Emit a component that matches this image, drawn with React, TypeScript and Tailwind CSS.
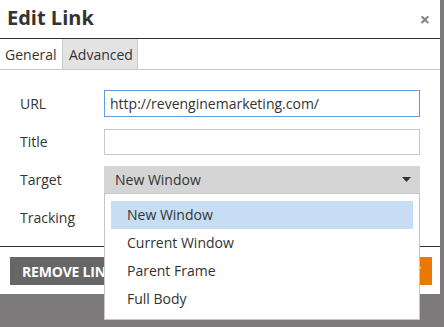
import React from 'react'

const font = { fontFamily: '"Open Sans", "Noto Sans", sans-serif' }

function Row({ label, children }: { label: string; children?: React.ReactNode }) {
  return (
    <div className="flex items-center h-[27px]">
      <div className="w-[104px] pl-[20px] text-[14px] text-[#333]">{label}</div>
      <div className="w-[316px]">{children}</div>
    </div>
  )
}

export default function App() {
  const options = ['New Window', 'Current Window', 'Parent Frame', 'Full Body']
  return (
    <div className="relative w-[444px] h-[327px] bg-[#7c7a7b] overflow-hidden" style={font}>
      <div className="w-[440px] h-[294px] bg-white flex flex-col">
        {/* header */}
        <div className="h-[39px] flex items-center justify-between border-b border-[#333] pl-[7px] pr-[10px]">
          <h1 className="text-[20px] font-bold text-[#333] leading-none -mt-[2px]">Edit Link</h1>
          <span className="text-[18px] font-bold text-[#808080] leading-none -mt-[1px]">×</span>
        </div>
        {/* tabs */}
        <div className="h-[31px] flex border-b border-[#cccccc]">
          <div className="w-[62px] flex items-center pl-[5px] text-[14px] text-[#333]">General</div>
          <div className="w-[76px] flex items-center pl-[6px] text-[14px] text-[#333] bg-[#e3e3e3] border-x border-[#cccccc]">Advanced</div>
        </div>
        {/* form */}
        <div className="flex flex-col gap-[11px] pt-[20px]">
          <Row label="URL">
            <div className="h-[27px] border border-[#5b9fde] flex items-center px-[5px] text-[14px] text-[#333]">
              http://revenginemarketing.com/
            </div>
          </Row>
          <Row label="Title">
            <div className="h-[26px] border border-[#c8c8c8]" />
          </Row>
          <Row label="Target">
            <div className="h-[27px] bg-[#d5d5d5] flex items-center justify-between pl-[11px] pr-[9px] text-[14px] text-[#333]">
              <span>New Window</span>
              <svg width="9" height="5" viewBox="0 0 9 5"><path d="M0 0h9L4.5 5z" fill="#333" /></svg>
            </div>
          </Row>
          <Row label="Tracking" />
        </div>
        {/* footer */}
        <div className="mt-[15px] border-t border-[#333] pt-[10px] flex justify-between pl-[10px] pr-[8px]">
          <button className="h-[28px] bg-[#666666] text-white text-[14px] font-bold px-[12px] tracking-[-0.2px]">REMOVE LINK</button>
          <button className="h-[28px] bg-[#ec7804] text-white text-[14px] font-bold px-[11px]">APPLY</button>
        </div>
      </div>
      {/* dropdown menu */}
      <div className="absolute left-[104px] top-[193px] w-[316px] h-[127px] bg-white border border-[#c6c6c6] px-[6px] py-[7px] flex flex-col">
        {options.map((o, i) => (
          <div key={o} className={`h-[28px] flex items-center pl-[16px] text-[14px] text-[#333] ${i === 0 ? 'bg-[#c6ddf3]' : ''}`}>
            {o}
          </div>
        ))}
      </div>
    </div>
  )
}
